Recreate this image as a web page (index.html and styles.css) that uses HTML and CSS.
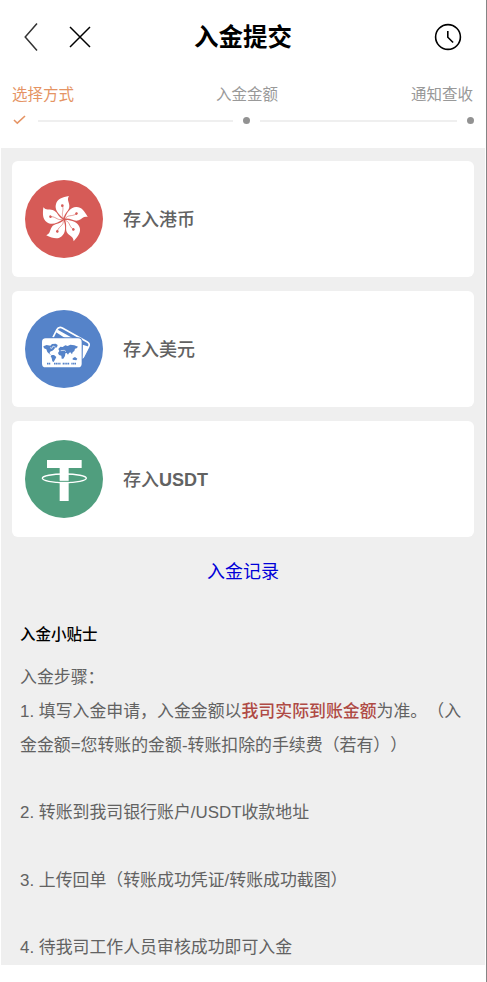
FILE: index.html
```html
<!DOCTYPE html>
<html lang="zh-CN">
<head>
<meta charset="utf-8">
<title>入金提交</title>
<link rel="stylesheet" href="styles.css">
</head>
<body>
<div class="page">
  <header class="topbar">
    <div class="nav">
      <svg class="back" viewBox="0 0 14 30"><path d="M13 1.5 1.2 15 13 28.5"/></svg>
      <svg class="close" viewBox="0 0 22 22"><path d="M1 1 21 21M21 1 1 21"/></svg>
    </div>
    <h1>入金提交</h1>
    <svg class="history" viewBox="0 0 28 28"><circle cx="14" cy="14" r="12.4"/><path d="M13.8 8v6.2l5.3 5.3"/></svg>
  </header>
  <section class="steps">
    <div class="step-names"><span class="active">选择方式</span><span>入金金额</span><span>通知查收</span></div>
    <div class="track">
      <svg class="check" viewBox="0 0 13 10"><path d="M1 5 4.3 8.2 12 1"/></svg>
      <i class="line"></i><i class="dot"></i><i class="line second"></i><i class="dot"></i>
    </div>
  </section>
  <main class="content">
    <div class="card">
      <svg class="badge" viewBox="45 45 234 234">
        <defs>
          <g id="petal">
            <path fill="#fff" d="M161 160C144 148 133 132 138 117C142 102 157 97 177 93C170 104 177 110 178 122C179 137 163 143 161 160Z"/>
            <path fill="none" stroke="#d65b57" stroke-width="1.6" d="M162 159C151 148 162 139 158 124"/>
            <circle cx="157" cy="122" r="4" fill="#d65b57"/>
          </g>
        </defs>
        <circle cx="162" cy="162" r="117" fill="#d65b57"/>
        <use href="#petal"/>
        <use href="#petal" transform="rotate(72 162 163)"/>
        <use href="#petal" transform="rotate(144 162 163)"/>
        <use href="#petal" transform="rotate(216 162 163)"/>
        <use href="#petal" transform="rotate(288 162 163)"/>
      </svg>
      <span>存入港币</span>
    </div>
    <div class="card">
      <svg class="badge" viewBox="45 45 234 234">
        <circle cx="162" cy="162" r="117" fill="#5583c9"/>
        <path fill="none" stroke="#fff" stroke-width="5" stroke-linejoin="round" d="M129 127 140 105Q146 94 157 99L232 141Q241 146 236 155L221 184Q219 188 216 190"/>
        <path fill="#fff" d="M137 111 143 104 205 139Q216 145 216 156L216 165 187 143Z"/>
        <path fill="#fff" d="M218 149 237 155 221 187 216 191Z"/>
        <rect x="93" y="127" width="125" height="93" rx="13" fill="#5583c9"/>
        <rect x="96" y="130" width="119" height="87" rx="11" fill="#fff"/>
        <g fill="#5583c9">
          <path d="M100 154 110 150 121 152 126 147 137 146 143 150 141 157 135 159 131 164 126 168 122 169 118 175 124 179 119 178 112 171 109 163 102 160Z"/>
          <path d="M125 180 132 180 139 186 136 192 131 201 127 199 125 189 122 184Z"/>
          <path d="M145 162 151 155 158 156 166 151 173 153 181 149 193 151 204 155 200 160 195 161 193 168 188 172 186 178 181 172 177 174 174 179 170 174 166 175 165 183 160 191 155 191 154 182 147 180 144 174 148 168Z"/>
          <path d="M188 190 195 186 202 191 199 196 188 194Z"/>
        </g>
        <path fill="none" stroke="#fff" stroke-width="2" d="M120 158l6 2 3-7 8 4M152 167l11-1 5 4"/>
        <path fill="none" stroke="#5583c9" stroke-width="5" stroke-dasharray="4 1.2" d="M111 206h11M132 206h20M158 206h20M184 206h14"/>
      </svg>
      <span>存入美元</span>
    </div>
    <div class="card">
      <svg class="badge" viewBox="45 45 234 234">
        <circle cx="162" cy="162" r="117" fill="#509e7e"/>
        <path fill="#fff" d="M111 105H215V129H176V228H149V129H111Z"/>
        <ellipse cx="163" cy="160" rx="66" ry="13" fill="none" stroke="#fff" stroke-width="4"/>
        <path fill="none" stroke="#509e7e" stroke-width="3" d="M145 169H180"/>
        <path fill="none" stroke="#fff" stroke-width="3" d="M145 173H180"/>
      </svg>
      <span>存入<b>USDT</b></span>
    </div>
    <a class="records">入金记录</a>
    <section class="tips">
      <h2>入金小贴士</h2>
      <p>入金步骤：</p>
      <p>1. 填写入金申请，入金金额以<strong>我司实际到账金额</strong>为准。（入<br>金金额=您转账的金额-转账扣除的手续费（若有））</p>
      <p class="gap">2. 转账到我司银行账户/USDT收款地址</p>
      <p class="gap">3. 上传回单（转账成功凭证/转账成功截图）</p>
      <p class="gap">4. 待我司工作人员审核成功即可入金</p>
    </section>
  </main>
</div>
</body>
</html>
```
FILE: styles.css
```css
* { box-sizing: border-box; }
body {
  margin: 0;
  background: #fff;
  font-family: "Liberation Sans", "Noto Sans CJK SC", sans-serif;
  text-spacing-trim: space-all;
}
.page { height: 982px; overflow: hidden; border-right: 1px solid #858585; padding: 0 1px; }
svg { display: block; }
.topbar {
  height: 74px;
  display: grid;
  grid-template-columns: 1fr auto 1fr;
  align-items: center;
  padding: 0 23px;
}
.nav { display: flex; align-items: center; gap: 31px; }
.nav path, .history circle, .history path, .check path { fill: none; stroke: #000; }
.back { width: 14px; height: 30px; }
.close { width: 22px; height: 22px; }
.nav path { stroke-width: 1.5; }
.nav .back path { stroke: #333; }
h1 { margin: 0; padding-top: 1px; font-size: 24.5px; line-height: 36px; font-weight: 700; white-space: nowrap; }
.history { width: 28px; height: 28px; justify-self: end; }
.history circle, .history path { stroke-width: 1.6; }
.steps { height: 74px; padding: 9px 11px 0; }
.step-names {
  display: grid;
  grid-template-columns: 204px 1fr auto;
  padding-right: 1px;
  font-size: 15.5px;
  line-height: 24px;
  font-weight: 400;
  color: #999;
}
.step-names .active { color: #e59464; }
.track { display: flex; align-items: center; height: 10px; margin-top: 8px; }
.check { flex: none; width: 13px; height: 10px; margin: 0 12px 0 1px; }
.check path { stroke: #e59464; stroke-width: 1.6; }
.line { flex: 0 0 195px; height: 2px; background: #efefef; margin-top: 1px; }
.line.second { flex-basis: 197px; }
.dot { flex: none; width: 7px; height: 7px; border-radius: 50%; background: #929292; margin: 0 10px; }
.content {
  height: 817px;
  padding: 13px 11px 0;
  background: #efefef;
  display: flex;
  flex-direction: column;
}
.card {
  flex: none;
  height: 116px;
  margin-bottom: 14px;
  border-radius: 6px;
  background: #fff;
  display: flex;
  align-items: center;
  gap: 20px;
  padding-left: 13px;
  font-size: 18px;
  font-weight: 500;
  color: #626262;
}
.card span { padding-bottom: 2px; }
.badge { width: 78px; height: 78px; }
.records { align-self: center; font-size: 18px; line-height: 26px; margin-top: 8px; color: #0000d8; }
.tips { padding: 0 8px; color: #626262; font-size: 16.9px; line-height: 33.8px; white-space: nowrap; }
h2 { margin: 38px 0 14px; font-size: 15.5px; line-height: 24px; font-weight: 500; color: #000; }
p { margin: 0; }
p.gap { margin-top: 33.8px; }
strong { color: #af4a45; font-weight: 500; }
```
